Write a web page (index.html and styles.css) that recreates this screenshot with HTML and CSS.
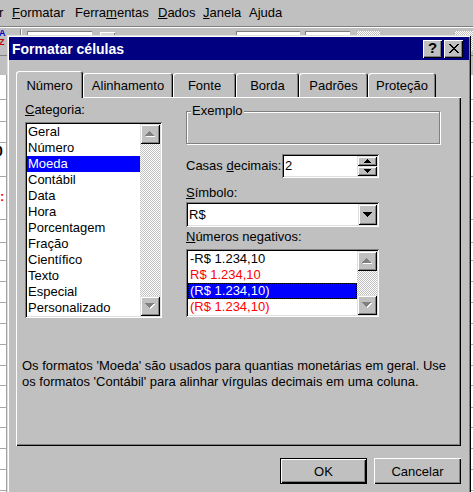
FILE: index.html
```html
<!DOCTYPE html>
<html lang="pt-BR">
<head>
<meta charset="utf-8">
<title>Formatar células</title>
<link rel="stylesheet" href="styles.css">
</head>
<body>
<div class="app">
  <div class="menubar">
    <span class="menu m0">r</span>
    <span class="menu m1"><u>F</u>ormatar</span>
    <span class="menu m2">Ferra<u>m</u>entas</span>
    <span class="menu m3"><u>D</u>ados</span>
    <span class="menu m4"><u>J</u>anela</span>
    <span class="menu m5">A<u>j</u>uda</span>
  </div>
  <div class="toolbar">
    <div class="sort-icon"><span class="az-a">A</span><span class="az-z">Z</span></div>
    <div class="tb-sep"></div>
    <div class="tb-field f1"></div>
    <div class="tb-icon"></div>
    <div class="tb-field f2"></div>
    <div class="tb-field f3"></div>
    <div class="tb-check c1"></div>
    <div class="tb-check c2"></div>
  </div>
  <div class="formula"></div>
  <div class="sheet">
    <div class="row r25"></div>
    <div class="row r22"></div>
    <div class="row r21"></div>
    <div class="row r34"><span class="cell-bold">0</span></div>
    <div class="row r43"><span class="cell-red">:</span></div>
    <div class="row r23"></div>
    <div class="row r18"></div>
    <div class="row r21"></div>
    <div class="row r21"></div>
    <div class="row r21"></div>
    <div class="row r21"></div>
    <div class="row r21"></div>
    <div class="row r20"></div>
    <div class="row r22"></div>
    <div class="row r20"></div>
    <div class="row r21"></div>
    <div class="row r21"></div>
    <div class="row r21"></div>
    <div class="row r21"></div>
  </div>

  <div class="dialog">
    <div class="titlebar">
      <span class="title">Formatar células</span>
      <div class="title-btns">
        <span class="tbtn help">?</span>
        <span class="tbtn close">
          <svg width="10" height="9" viewBox="0 0 10 9" shape-rendering="crispEdges"><path d="M0 0h2v1h1v1h1v1h2V2h1V1h1V0h2v1H9v1H8v1H7v1H6v1h1v1h1v1h1v1h1v1H8V8H7V7H6V6H4v1H3v1H2v1H0V8h1V7h1V6h1V5h1V4H3V3H2V2H1V1H0z" fill="#000"/></svg>
        </span>
      </div>
    </div>
    <div class="dialog-body">
      <div class="tabs">
        <div class="tab active t1">Número</div>
        <div class="tab t2">Alinhamento</div>
        <div class="tab t3">Fonte</div>
        <div class="tab t4">Borda</div>
        <div class="tab t5">Padrões</div>
        <div class="tab t6">Proteção</div>
      </div>
      <div class="panel">
        <div class="cols">
          <div class="col-left">
            <div class="label"><u>C</u>ategoria:</div>
            <div class="listbox cat-list">
              <div class="items">
                <div class="item">Geral</div>
                <div class="item">Número</div>
                <div class="item selected">Moeda</div>
                <div class="item">Contábil</div>
                <div class="item">Data</div>
                <div class="item">Hora</div>
                <div class="item">Porcentagem</div>
                <div class="item">Fração</div>
                <div class="item">Científico</div>
                <div class="item">Texto</div>
                <div class="item">Especial</div>
                <div class="item">Personalizado</div>
              </div>
              <div class="vscroll">
                <div class="sbtn"><svg width="10" height="6" viewBox="0 0 10 6" shape-rendering="crispEdges"><path d="M5 1h1v1h1v1h1v1h1v1h1v1H1V5h1V4h1V3h1V2h1z" fill="#fff"/><path d="M4 0h1v1h1v1h1v1h1v1h1v1H0V4h1V3h1V2h1V1h1z" fill="#808080"/></svg></div>
                <div class="track"></div>
                <div class="sbtn"><svg width="10" height="6" viewBox="0 0 10 6" shape-rendering="crispEdges"><path d="M1 1h9v1H9v1H8v1H7v1H6v1H5V5H4V4H3V3H2V2H1z" fill="#fff"/><path d="M0 0h9v1H8v1H7v1H6v1H5v1H4V4H3V3H2V2H1V1H0z" fill="#808080"/></svg></div>
              </div>
            </div>
          </div>
          <div class="col-right">
            <div class="groupbox"><span class="caption">Exemplo</span></div>
            <div class="spin-row">
              <span class="label spin-label">Casas <u>d</u>ecimais:</span>
              <div class="spinbox">
                <span class="field-text">2</span>
                <div class="spin-btns">
                  <div class="spin-btn"><svg width="7" height="4" viewBox="0 0 7 4" shape-rendering="crispEdges"><path d="M3 0h1v1h1v1h1v1h1v1H0V3h1V2h1V1h1z" fill="#000"/></svg></div>
                  <div class="spin-btn"><svg width="7" height="4" viewBox="0 0 7 4" shape-rendering="crispEdges"><path d="M0 0h7v1H6v1H5v1H4v1H3V3H2V2H1V1H0z" fill="#000"/></svg></div>
                </div>
              </div>
            </div>
            <div class="label l-simbolo"><u>S</u>ímbolo:</div>
            <div class="combo">
              <span class="field-text">R$</span>
              <div class="combo-btn"><svg width="9" height="5" viewBox="0 0 9 5" shape-rendering="crispEdges"><path d="M0 0h9v1H8v1H7v1H6v1H5v1H4V4H3V3H2V2H1V1H0z" fill="#000"/></svg></div>
            </div>
            <div class="label l-neg"><u>N</u>úmeros negativos:</div>
            <div class="listbox neg-list">
              <div class="items">
                <div class="item">-R$ 1.234,10</div>
                <div class="item red">R$ 1.234,10</div>
                <div class="item selected focus">(R$ 1.234,10)</div>
                <div class="item red">(R$ 1.234,10)</div>
              </div>
              <div class="vscroll">
                <div class="sbtn"><svg width="10" height="6" viewBox="0 0 10 6" shape-rendering="crispEdges"><path d="M5 1h1v1h1v1h1v1h1v1h1v1H1V5h1V4h1V3h1V2h1z" fill="#fff"/><path d="M4 0h1v1h1v1h1v1h1v1h1v1H0V4h1V3h1V2h1V1h1z" fill="#808080"/></svg></div>
                <div class="track"></div>
                <div class="sbtn"><svg width="10" height="6" viewBox="0 0 10 6" shape-rendering="crispEdges"><path d="M1 1h9v1H9v1H8v1H7v1H6v1H5V5H4V4H3V3H2V2H1z" fill="#fff"/><path d="M0 0h9v1H8v1H7v1H6v1H5v1H4V4H3V3H2V2H1V1H0z" fill="#808080"/></svg></div>
              </div>
            </div>
          </div>
        </div>
        <p class="desc">Os formatos 'Moeda' são usados para quantias monetárias em geral. Use<br>os formatos 'Contábil' para alinhar vírgulas decimais em uma coluna.</p>
      </div>
      <div class="buttons">
        <button class="btn default">OK</button>
        <button class="btn">Cancelar</button>
      </div>
    </div>
  </div>
</div>
</body>
</html>
```

FILE: styles.css
```css
* { box-sizing: border-box; }
html, body { margin: 0; padding: 0; }
body {
  background: #c0c0c0;
  font-family: "Liberation Sans", Arial, sans-serif;
  font-size: 13px;
  color: #000;
}
.app {
  position: relative;
  width: 473px;
  height: 492px;
  overflow: hidden;
  background: #c0c0c0;
}

/* ---- background application ---- */
.menubar {
  display: flex;
  height: 27px;
  line-height: 26px;
  border-bottom: 1px solid #808080;
  white-space: nowrap;
}
.menu { display: block; }
.m0 { width: 13px; margin-left: -1px; }
.m1 { width: 63px; }
.m2 { width: 83px; }
.m3 { width: 45px; }
.m4 { width: 46px; }

.toolbar {
  display: flex;
  align-items: flex-start;
  height: 28px;
  border-top: 1px solid #fff;
  padding-top: 1px;
}
.sort-icon {
  display: flex;
  flex-direction: column;
  width: 8px;
  margin-left: -1px;
  font-weight: bold;
  font-size: 9px;
  line-height: 9px;
}
.az-a { color: #0000c0; }
.az-z { color: #c00000; }
.tb-sep {
  width: 2px;
  height: 22px;
  margin-left: 13px;
  border-left: 1px solid #808080;
  border-right: 1px solid #fff;
}
.tb-field {
  height: 20px;
  margin-top: 2px;
  background: #fff;
  box-shadow: inset 1px 1px #808080;
}
.f1 { width: 65px; margin-left: 5px; }
.f2 { width: 64px; margin-left: 121px; }
.f3 { width: 45px; margin-left: 5px; }
.tb-icon {
  width: 15px;
  height: 16px;
  margin-left: 8px;
  margin-top: 3px;
  background: #d8d8d8;
  box-shadow: inset 1px 1px #fff, inset -1px -1px #808080;
}
.tb-check {
  height: 20px;
  margin-top: 2px;
  background-image: repeating-conic-gradient(#fff 0 25%, #c0c0c0 0 50%);
  background-size: 2px 2px;
}
.c1 { width: 23px; margin-left: 7px; }
.c2 { width: 18px; margin-left: 75px; }

.formula {
  height: 20px;
  border-top: 1px solid #808080;
}
.sheet {
  background: linear-gradient(90deg, #fff 0 6px, #a0a0a0 6px 7px, #fff 7px);
}
.row {
  border-bottom: 1px solid #a8a8a8;
  line-height: 16px;
  white-space: nowrap;
}
.r18 { height: 18px; }
.r20 { height: 20px; }
.r21 { height: 21px; }
.r22 { height: 22px; }
.r23 { height: 23px; }
.r25 { height: 25px; }
.r34 { height: 34px; }
.r43 { height: 43px; padding-top: 12px; }
.cell-bold { display: inline-block; margin-left: -5px; font-weight: bold; font-size: 14px; }
.cell-red { display: inline-block; margin-left: 0; color: #ff0000; font-weight: bold; }

/* ---- dialog window ---- */
.dialog {
  position: absolute;
  left: 7px;
  top: 35px;
  width: 464px;
  height: 470px;
  padding: 2px;
  background: #c0c0c0;
  box-shadow: inset 1px 1px #dfdfdf, inset -1px -1px #000, inset 2px 2px #fff, inset -2px -2px #808080;
}
.titlebar {
  display: flex;
  align-items: center;
  justify-content: space-between;
  height: 23px;
  padding: 0 6px 0 3px;
  background: #000080;
  color: #fff;
}
.title {
  font-weight: bold;
  font-size: 14px;
  line-height: 16px;
  white-space: nowrap;
}
.title-btns { display: flex; gap: 2px; }
.tbtn {
  display: flex;
  align-items: center;
  justify-content: center;
  width: 19px;
  height: 18px;
  background: #c0c0c0;
  color: #000;
  box-shadow: inset 1px 1px #fff, inset -1px -1px #000, inset -2px -2px #808080;
}
.help {
  font-weight: bold;
  font-size: 15px;
  line-height: 16px;
  padding-bottom: 1px;
}
.close svg { display: block; margin-top: -1px; }

.dialog-body { padding: 11px 8px 0 7px; }

.tabs {
  display: flex;
  align-items: flex-end;
  height: 26px;
}
.tab {
  height: 24px;
  padding-top: 5px;
  line-height: 16px;
  text-align: center;
  white-space: nowrap;
  background: #c0c0c0;
  border-radius: 3px 3px 0 0;
  box-shadow: inset 1px 1px #fff, inset -1px 0 #000, inset -2px 0 #808080;
}
.tab.active {
  position: relative;
  z-index: 1;
  height: 27px;
  margin-bottom: -1px;
  padding-top: 7px;
}
.t1 { width: 67px; }
.t2 { width: 90px; }
.t3 { width: 63px; }
.t4 { width: 63px; }
.t5 { width: 69px; }
.t6 { width: 68px; }

.panel {
  width: 445px;
  height: 349px;
  padding: 5px 0 0 6px;
  background: #c0c0c0;
  box-shadow: inset 1px 1px #fff, inset -1px -1px #000, inset -2px -2px #808080;
}
.cols { display: flex; margin-left: 3px; }
.col-left { width: 137px; margin-right: 24px; }
.col-right { width: 255px; }
.label { line-height: 16px; height: 16px; white-space: nowrap; }

.listbox {
  display: flex;
  padding: 2px;
  background: #fff;
  box-shadow: inset 1px 1px #808080, inset -1px -1px #fff, inset 2px 2px #000, inset -2px -2px #dfdfdf;
}
.listbox .items { flex: 1; overflow: hidden; }
.item {
  height: 16px;
  line-height: 16px;
  padding-left: 1px;
  white-space: nowrap;
}
.item.selected { background: #0000ff; color: #fff; }
.item.red { color: #ff0000; }
.item.focus { outline: 1px dotted #000; outline-offset: -1px; }
.cat-list { width: 137px; height: 196px; margin-top: 4px; }
.neg-list { width: 193px; height: 68px; margin-top: 4px; }
.neg-list .item { padding-left: 2px; }

.vscroll {
  display: flex;
  flex-direction: column;
  width: 20px;
}
.sbtn {
  display: flex;
  align-items: center;
  justify-content: center;
  height: 20px;
  background: #c0c0c0;
  box-shadow: inset 1px 1px #dfdfdf, inset -1px -1px #000, inset 2px 2px #fff, inset -2px -2px #808080;
}
.sbtn svg { display: block; }
.track {
  flex: 1;
  background-image: repeating-conic-gradient(#fff 0 25%, #c0c0c0 0 50%);
  background-size: 2px 2px;
}

.groupbox {
  position: relative;
  width: 254px;
  height: 33px;
  margin-top: 9px;
  border: 1px solid #808080;
  box-shadow: inset 1px 1px #fff, 1px 1px #fff;
}
.caption {
  position: absolute;
  top: -9px;
  left: 4px;
  padding: 0 1px;
  line-height: 16px;
  background: #c0c0c0;
}

.spin-row {
  display: flex;
  align-items: center;
  height: 24px;
  margin-top: 10px;
}
.spin-label { width: 96px; }
.spinbox, .combo {
  display: flex;
  align-items: stretch;
  padding: 2px;
  background: #fff;
  box-shadow: inset 1px 1px #808080, inset -1px -1px #fff, inset 2px 2px #000, inset -2px -2px #dfdfdf;
}
.spinbox { width: 97px; height: 24px; }
.field-text {
  flex: 1;
  line-height: 20px;
  padding-left: 1px;
}
.spin-btns { display: flex; flex-direction: column; width: 20px; }
.spin-btn {
  flex: 1;
  display: flex;
  align-items: center;
  justify-content: center;
  background: #c0c0c0;
  box-shadow: inset 1px 1px #dfdfdf, inset -1px -1px #000, inset 2px 2px #fff, inset -2px -2px #808080;
}
.spin-btn svg { display: block; }

.l-simbolo { margin-top: 7px; }
.combo { width: 193px; height: 25px; margin-top: 1px; }
.combo .field-text { line-height: 21px; }
.combo-btn {
  width: 19px;
  display: flex;
  align-items: center;
  justify-content: center;
  background: #c0c0c0;
  box-shadow: inset 1px 1px #dfdfdf, inset -1px -1px #000, inset 2px 2px #fff, inset -2px -2px #808080;
}
.combo-btn svg { display: block; }
.l-neg { margin-top: 2px; }

.desc {
  margin: 40px 0 0 0;
  line-height: 16px;
  white-space: nowrap;
}

.buttons {
  display: flex;
  justify-content: flex-end;
  gap: 7px;
  width: 445px;
  margin-top: 12px;
}
.btn {
  width: 87px;
  height: 26px;
  padding: 0;
  border: 0;
  font-family: "Liberation Sans", Arial, sans-serif;
  font-size: 13px;
  color: #000;
  background: #c0c0c0;
  box-shadow: inset 1px 1px #fff, inset -1px -1px #000, inset -2px -2px #808080;
}
.btn.default {
  border: 1px solid #000;
}
```
